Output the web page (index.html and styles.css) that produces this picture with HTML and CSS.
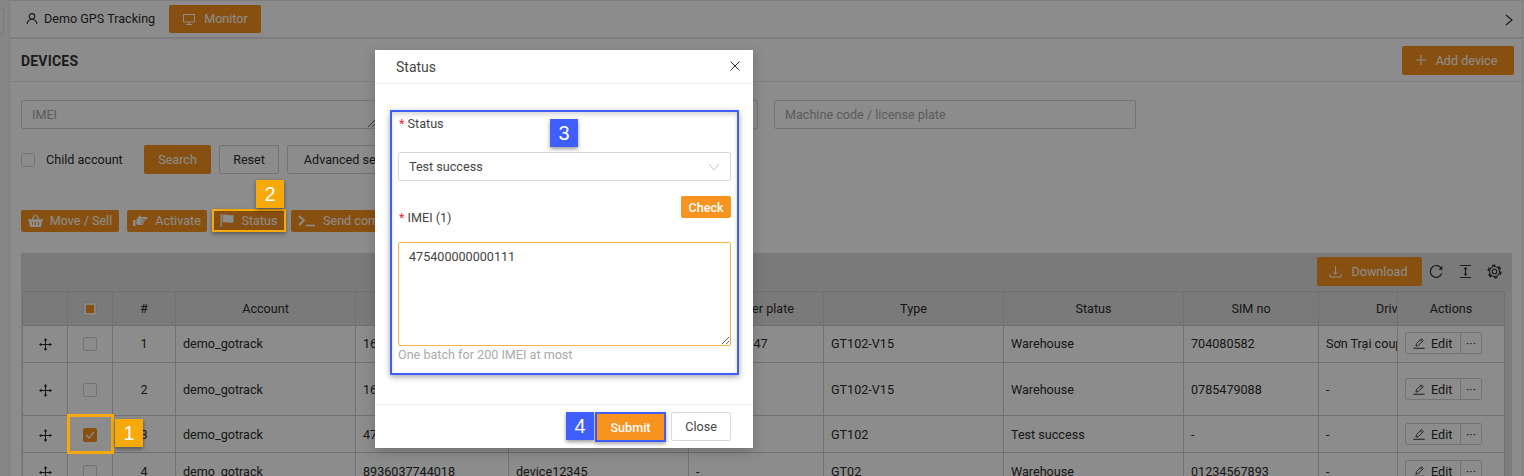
FILE: index.html
```html
<!DOCTYPE html>
<html lang="en">
<head>
    <meta charset="UTF-8">
    <title>Devices</title>
    <link rel="stylesheet" href="styles.css">
</head>
<body>
    <svg class="defs" width="0" height="0">
        <symbol id="i-move" viewBox="0 0 16 16">
            <path d="M8 1.500v13M1.500 8h13" fill="none" stroke="currentColor" stroke-width="1.200"/>
            <path d="M8 0l2.200 3H5.800zM8 16l-2.200-3h4.400zM0 8l3-2.200v4.400zM16 8l-3 2.200V5.800z" fill="currentColor"/>
        </symbol>
        <symbol id="i-edit" viewBox="0 0 16 16">
            <path d="M4.500 11.500l.6-2.700L10.800 3.100l2.100 2.100L7.200 10.900zM9.600 4.300l2.100 2.100" fill="none" stroke="currentColor" stroke-width="1"/>
            <path d="M1.500 14h13" stroke="currentColor" stroke-width="1.100"/>
        </symbol>
    </svg>

    <div class="app">
        <div class="rail"><span class="rail-btn"></span></div>
        <div class="main">
            <div class="topbar">
                <span class="tab">
                    <svg class="icon" width="12" height="13" viewBox="0 0 14 14"><circle cx="7" cy="4.500" r="3.200" fill="none" stroke="currentColor" stroke-width="1.300"/><path d="M1.300 13.500a5.700 5.700 0 0 1 11.400 0" fill="none" stroke="currentColor" stroke-width="1.300"/></svg>
                    Demo GPS Tracking
                </span>
                <span class="btn btn-primary tab-active">
                    <svg class="icon" width="14" height="14" viewBox="0 0 14 14"><path d="M1.500 2.500h11v7.500h-11zM7 10v2.500M4 12.500h6" fill="none" stroke="currentColor" stroke-width="1"/></svg>
                    Monitor
                </span>
                <svg class="top-arrow" width="10" height="12" viewBox="0 0 10 12"><path d="M2 1l6 5-6 5" fill="none" stroke="currentColor" stroke-width="1.100"/></svg>
            </div>

            <div class="panel">
                <div class="panel-head">
                    <h1>DEVICES</h1>
                    <span class="btn btn-primary btn-add">
                        <svg class="icon" width="12" height="12" viewBox="0 0 12 12"><path d="M6 1v10M1 6h10" fill="none" stroke="currentColor" stroke-width="1.100"/></svg>
                        Add device
                    </span>
                </div>

                <div class="filters">
                    <textarea class="field field-imei" placeholder="IMEI"></textarea>
                    <input class="field field-name" placeholder="Device name">
                    <input class="field field-code" placeholder="Machine code / license plate">
                </div>

                <div class="search-row">
                    <span class="check"></span>
                    <span class="check-label">Child account</span>
                    <span class="btn btn-primary btn-search">Search</span>
                    <span class="btn btn-plain btn-reset">Reset</span>
                    <span class="btn btn-plain btn-advanced">Advanced search</span>
                </div>

                <div class="action-row">
                    <span class="btn btn-primary btn-action act-move">
                        <svg class="icon" width="15" height="13" viewBox="0 0 15 13"><path d="M0 5.200h15v1.600h-.8L13 13H2L.8 6.800H0zM3.700 5.200L6.300.4l1 .5-2.200 4.300zM11.300 5.200L8.700.4l-1 .5 2.200 4.300z" fill="currentColor"/><path d="M4.500 8v3M7.500 8v3M10.500 8v3" stroke="#f7931e" stroke-width="1"/></svg>
                        Move / Sell
                    </span>
                    <span class="btn btn-primary btn-action act-activate">
                        <svg class="icon" width="15" height="13" viewBox="0 0 15 13"><path d="M0 6h2.500v6H0zM3.300 6C4.500 5 5 3 6.500 1.500 7.500 1 8.200 2 7.800 3h5.700c1.500 0 1.500 2.300 0 2.300h-2c.5 1 .2 1.800-.4 2 .2 1-.2 1.700-.8 2 0 1-.5 1.700-1.500 1.700H6c-1 0-1.800-.4-2.700-.9z" fill="currentColor"/><path d="M8 5.300h3.500M8 7.300h3M8 9.300h2.300" stroke="#f7931e" stroke-width=".7"/></svg>
                        Activate
                    </span>
                    <span class="btn btn-primary btn-action act-status">
                        <svg class="icon" width="14" height="13" viewBox="0 0 14 13"><path d="M.5 0h1.300v13H.5zM2.600 1c3.500-1.300 5.500 1.200 10.900 0v7.500c-5 1.200-7.400-1.200-10.900 0z" fill="currentColor"/></svg>
                        Status
                    </span>
                    <span class="btn btn-primary btn-action act-send">
                        <svg class="icon" width="18" height="12" viewBox="0 0 18 12"><path d="M1 1l5 4.500-5 4.500" fill="none" stroke="currentColor" stroke-width="1.800"/><path d="M8 10.500h9" stroke="currentColor" stroke-width="1.600"/></svg>
                        Send command
                    </span>
                </div>

                <div class="table-tools">
                    <span class="btn btn-primary btn-download">
                        <svg class="icon" width="13" height="13" viewBox="0 0 13 13"><path d="M6.500 1v8M3.800 6.500l2.700 2.700 2.700-2.700M1 9v3h11V9" fill="none" stroke="currentColor" stroke-width="1"/></svg>
                        Download
                    </span>
                    <svg class="tool" width="15" height="15" viewBox="0 0 15 15"><path d="M12.800 9.500a5.900 5.900 0 1 1-.2-4.600" fill="none" stroke="currentColor" stroke-width="1.200"/><path d="M13.400 1.800v3.900H9.600z" fill="currentColor"/></svg>
                    <svg class="tool" width="15" height="15" viewBox="0 0 15 15"><path d="M2 1.500h11M2 13.500h11M7.500 3.500v8" fill="none" stroke="currentColor" stroke-width="1.200"/><path d="M7.500 3l2 2.200h-4zM7.500 12l-2-2.200h4z" fill="currentColor"/></svg>
                    <svg class="tool" width="15" height="15" viewBox="0 0 15 15"><circle cx="7.500" cy="7.500" r="2.300" fill="none" stroke="currentColor" stroke-width="1.100"/><circle cx="7.500" cy="7.500" r="5" fill="none" stroke="currentColor" stroke-width="1.100"/><circle cx="7.500" cy="7.500" r="6.300" fill="none" stroke="currentColor" stroke-width="1.600" stroke-dasharray="3.400 3.200"/></svg>
                </div>

                <div class="table-wrap">
                    <table>
                        <colgroup>
                            <col class="c-drag"><col class="c-check"><col class="c-num"><col class="c-account"><col class="c-imei"><col class="c-name"><col class="c-plate"><col class="c-type"><col class="c-status"><col class="c-sim"><col class="c-driver"><col class="c-actions">
                        </colgroup>
                        <thead>
                            <tr>
                                <th></th>
                                <th><span class="check check-some"></span></th>
                                <th>#</th>
                                <th>Account</th>
                                <th>IMEI</th>
                                <th>Device name</th>
                                <th>Number plate</th>
                                <th>Type</th>
                                <th>Status</th>
                                <th>SIM no</th>
                                <th class="clip-head">Driver</th>
                                <th>Actions</th>
                            </tr>
                        </thead>
                        <tbody>
                            <tr class="row-short">
                                <td class="mid"><svg class="drag" width="13" height="13"><use href="#i-move"/></svg></td>
                                <td class="mid"><span class="check"></span></td>
                                <td class="mid">1</td>
                                <td>demo_gotrack</td>
                                <td>1689000000047</td>
                                <td>device047</td>
                                <td>29A-1234.47</td>
                                <td>GT102-V15</td>
                                <td>Warehouse</td>
                                <td>704080582</td>
                                <td class="clip">Sơn Trại coupe</td>
                                <td><span class="edit-group"><span class="edit"><svg width="14" height="14"><use href="#i-edit"/></svg>Edit</span><span class="more">···</span></span></td>
                            </tr>
                            <tr class="row-tall">
                                <td class="mid"><svg class="drag" width="13" height="13"><use href="#i-move"/></svg></td>
                                <td class="mid"><span class="check"></span></td>
                                <td class="mid">2</td>
                                <td>demo_gotrack</td>
                                <td>1689000000088</td>
                                <td>device088</td>
                                <td>-</td>
                                <td>GT102-V15</td>
                                <td>Warehouse</td>
                                <td>0785479088</td>
                                <td>-</td>
                                <td><span class="edit-group"><span class="edit"><svg width="14" height="14"><use href="#i-edit"/></svg>Edit</span><span class="more">···</span></span></td>
                            </tr>
                            <tr class="row-short">
                                <td class="mid"><svg class="drag" width="13" height="13"><use href="#i-move"/></svg></td>
                                <td class="mid"><span class="check check-on"><svg width="10" height="8" viewBox="0 0 10 8"><path d="M1 4l3 3 5-6" fill="none" stroke="#fff" stroke-width="1.200"/></svg></span></td>
                                <td class="mid">3</td>
                                <td>demo_gotrack</td>
                                <td>475400000000111</td>
                                <td>device111</td>
                                <td>-</td>
                                <td>GT102</td>
                                <td>Test success</td>
                                <td>-</td>
                                <td>-</td>
                                <td><span class="edit-group"><span class="edit"><svg width="14" height="14"><use href="#i-edit"/></svg>Edit</span><span class="more">···</span></span></td>
                            </tr>
                            <tr class="row-short">
                                <td class="mid"><svg class="drag" width="13" height="13"><use href="#i-move"/></svg></td>
                                <td class="mid"><span class="check"></span></td>
                                <td class="mid">4</td>
                                <td>demo_gotrack</td>
                                <td>8936037744018</td>
                                <td>device12345</td>
                                <td>-</td>
                                <td>GT02</td>
                                <td>Warehouse</td>
                                <td>01234567893</td>
                                <td>-</td>
                                <td><span class="edit-group"><span class="edit"><svg width="14" height="14"><use href="#i-edit"/></svg>Edit</span><span class="more">···</span></span></td>
                            </tr>
                        </tbody>
                    </table>
                </div>
            </div>
        </div>
    </div>

    <div class="overlay"></div>

    <!-- highlights that were drawn on top of the dimmed page -->
    <span class="mark mark-status"></span>
    <span class="mark mark-check"></span>
    <span class="badge badge-amber badge-1">1</span>
    <span class="badge badge-amber badge-2">2</span>

    <div class="modal">
        <div class="modal-head">
            <span>Status</span>
            <svg class="modal-x" width="10" height="10" viewBox="0 0 10 10"><path d="M.5.5l9 9M9.500.5l-9 9" fill="none" stroke="currentColor" stroke-width="1"/></svg>
        </div>
        <div class="modal-body">
            <div class="form-box">
                <label class="form-label"><i>*</i> Status</label>
                <div class="select">
                    <span>Test success</span>
                    <svg width="12" height="8" viewBox="0 0 12 8"><path d="M1 1l5 6 5-6" fill="none" stroke="#c4c4c4" stroke-width="1"/></svg>
                </div>
                <div class="imei-head">
                    <label class="form-label"><i>*</i> IMEI (1)</label>
                    <span class="btn btn-check">Check</span>
                </div>
                <textarea class="imei-input">475400000000111</textarea>
                <div class="help">One batch for 200 IMEI at most</div>
            </div>
        </div>
        <div class="modal-foot">
            <span class="btn btn-submit">Submit</span>
            <span class="btn btn-close">Close</span>
        </div>
    </div>

    <span class="badge badge-blue badge-3">3</span>
    <span class="badge badge-blue badge-4">4</span>
</body>
</html>
```

FILE: styles.css
```css
* {
    box-sizing: border-box;
}

html, body {
    margin: 0;
    height: 476px;
    overflow: hidden;
}

body {
    font-family: Roboto, "Liberation Sans", sans-serif;
    font-size: 12.6px;
    color: #2b2b2b;
    background: #fff;
}

.defs {
    position: absolute;
}

.app {
    display: flex;
    height: 476px;
    padding-right: 1px;
}

.rail {
    width: 10px;
    flex: none;
    padding-top: 8px;
    border-right: 1px solid #e6e6e6;
    background: #f4f4f4;
}

.rail-btn {
    display: block;
    width: 4px;
    height: 26px;
    border: 1px solid #ddd;
    border-left: 0;
    border-radius: 0 2px 2px 0;
}

.main {
    flex: 1;
    min-width: 0;
    border-right: 1px solid #e6e6e6;
}

.topbar {
    display: flex;
    align-items: center;
    height: 39px;
    padding: 0 8px 1px 16px;
    border-top: 1px solid #e6e6e6;
    border-bottom: 2px solid #e6e6e6;
}

.tab {
    display: flex;
    align-items: center;
    gap: 6px;
    width: 143px;
}

.icon {
    flex: none;
}

.top-arrow {
    margin: 2px 0 0 auto;
}

.btn {
    display: inline-flex;
    align-items: center;
    justify-content: center;
    border-radius: 2px;
    white-space: nowrap;
}

.btn-primary {
    background: #f7931e;
    color: #fff;
}

.btn-plain {
    background: #fff;
    border: 1px solid #d4d4d4;
    height: 29px;
}

.tab-active {
    width: 92px;
    height: 28px;
    gap: 8px;
}

.panel {
    padding: 0 10px 0 11px;
}

.panel-head {
    display: flex;
    align-items: center;
    justify-content: space-between;
    height: 43px;
    margin: 0 -10px 0 -11px;
    padding: 0 8px 0 11px;
    border-bottom: 1px solid #e8e8e8;
}

h1 {
    margin: 2px 0 0;
    font-size: 14px;
    font-weight: 700;
    color: #333;
    letter-spacing: .2px;
}

.btn-add {
    width: 112px;
    height: 29px;
    gap: 9px;
    padding-right: 4px;
}

.filters {
    display: flex;
    margin-top: 18px;
    gap: 14px;
}

.field {
    height: 29px;
    margin: 0;
    padding: 0 10px;
    font: inherit;
    line-height: 27px;
    color: #333;
    background: #fff;
    border: 1px solid #d4d4d4;
    border-radius: 2px;
    outline: 0;
}

.field::placeholder {
    color: #a8a8a8;
}

.field-imei {
    width: 356px;
}

.field-name {
    width: 367px;
}

.field-code {
    width: 362px;
    margin-left: 2px;
}

.search-row {
    display: flex;
    align-items: center;
    height: 29px;
    margin-top: 16px;
}

.check {
    display: inline-flex;
    align-items: center;
    justify-content: center;
    width: 14px;
    height: 14px;
    flex: none;
    vertical-align: middle;
    background: #fff;
    border: 1px solid #d4d4d4;
    border-radius: 2px;
}

.check-label {
    margin-left: 11px;
    width: 98px;
}

.btn-search {
    width: 67px;
    height: 29px;
}

.btn-reset {
    width: 60px;
    margin-left: 8px;
}

.btn-advanced {
    width: 130px;
    margin-left: 8px;
}

.action-row {
    display: flex;
    margin-top: 36px;
}

.btn-action {
    height: 22px;
    gap: 7px;
    padding-bottom: 1px;
}

.act-move {
    width: 98px;
}

.act-activate {
    width: 80px;
    margin-left: 8px;
}

.act-status {
    width: 70px;
    margin-left: 7px;
}

.act-send {
    width: 130px;
    margin-left: 7px;
    padding-left: 7px;
    justify-content: flex-start;
}

.table-tools {
    display: flex;
    align-items: center;
    justify-content: flex-end;
    height: 37px;
    margin-top: 21px;
    padding-right: 10px;
    gap: 14px;
    background: #dedede;
}

.btn-download {
    width: 105px;
    height: 29px;
    gap: 9px;
    padding-right: 2px;
    margin-right: -7px;
}

.tool {
    color: #333;
}

.table-wrap {
    height: 186px;
    padding: 1px 8px 0 1px;
    background: #e4e4e4;
}

table {
    width: 1482px;
    table-layout: fixed;
    border-collapse: collapse;
    background: #fff;
}

.c-drag, .c-check { width: 45px; }
.c-num { width: 63px; }
.c-account { width: 180px; }
.c-imei { width: 153px; }
.c-name { width: 180px; }
.c-plate { width: 135px; }
.c-type, .c-status { width: 180px; }
.c-sim { width: 135px; }
.c-driver { width: 79px; }
.c-actions { width: 107px; }

th, td {
    padding: 0 7px;
    border: 1px solid #cecece;
    font-weight: 400;
    white-space: nowrap;
    overflow: hidden;
}

th {
    height: 34px;
    text-align: center;
    background: #dedede;
}

.clip-head {
    text-align: left;
    padding-left: 57px;
}

.row-short td {
    height: 37px;
}

.row-tall td {
    height: 53px;
}

/* first row sits a pixel higher in its cells */
tbody tr:first-child td {
    padding-bottom: 2px;
}

.mid {
    text-align: center;
}

.clip {
    text-overflow: clip;
}

.check-some {
    background: #f4f4f4;
}

.check-some::after {
    content: "";
    width: 8px;
    height: 8px;
    background: #f7931e;
}

.check-on {
    background: #f7931e;
    border-color: #f7931e;
}

.drag {
    vertical-align: middle;
    color: #222;
}

.edit-group {
    display: inline-flex;
    height: 22px;
    border: 1px solid #d4d4d4;
    border-radius: 2px;
}

.edit {
    display: flex;
    align-items: center;
    gap: 5px;
    width: 55px;
    padding-left: 6px;
    border-right: 1px solid #d4d4d4;
}

.more {
    display: flex;
    align-items: center;
    justify-content: center;
    width: 20px;
}

.overlay {
    position: absolute;
    inset: 0;
    background: rgba(0, 0, 0, .45);
}

.mark {
    position: absolute;
    border: 3px solid #f8a90a;
    box-shadow: 0 2px 4px rgba(0, 0, 0, .35);
}

.mark-status {
    left: 212px;
    top: 209px;
    width: 74px;
    height: 23px;
    border-width: 2px;
}

.mark-check {
    left: 67px;
    top: 414px;
    width: 47px;
    height: 40px;
    box-shadow: none;
}

.badge {
    position: absolute;
    display: flex;
    align-items: center;
    justify-content: center;
    width: 28px;
    height: 28px;
    font-family: "Liberation Sans", Arial, sans-serif;
    font-size: 20px;
    color: #fff;
    box-shadow: 0 2px 4px rgba(0, 0, 0, .4);
}

.badge-amber {
    background: #f8a90a;
}

.badge-blue {
    background: #3f5efb;
}

.badge-1 { left: 115px; top: 419px; }
.badge-2 { left: 256px; top: 180px; }
.badge-3 { left: 550px; top: 119px; }
.badge-4 { left: 566px; top: 412px; }

.modal {
    position: absolute;
    left: 375px;
    top: 50px;
    width: 378px;
    height: 398px;
    display: flex;
    flex-direction: column;
    background: #fff;
    box-shadow: 0 4px 12px rgba(0, 0, 0, .2);
}

.modal-head {
    display: flex;
    align-items: center;
    justify-content: space-between;
    height: 34px;
    padding: 0 13px 0 21px;
    font-size: 14px;
    color: #444;
    border-bottom: 1px solid #ececec;
}

.modal-x {
    color: #333;
    margin-bottom: 2px;
}

.modal-body {
    flex: 1;
    padding: 26px 14px 0 15px;
}

.form-box {
    height: 265px;
    padding: 2px 6px 0 6px;
    border: 2px solid #3f5efb;
    box-shadow: 0 2px 6px rgba(0, 0, 0, .35), inset 0 3px 4px rgba(0, 0, 0, .15);
}

.form-label {
    display: block;
    line-height: 20px;
    color: #444;
    margin-left: 1px;
}

.form-label i {
    font-style: normal;
    color: #f5222d;
}

.select {
    display: flex;
    align-items: center;
    justify-content: space-between;
    height: 29px;
    margin-top: 18px;
    padding: 0 10px;
    color: #444;
    border: 1px solid #d9d9d9;
    border-radius: 2px;
}

.imei-head {
    display: flex;
    justify-content: space-between;
    height: 31px;
    margin-top: 15px;
}

.imei-head .form-label {
    align-self: flex-end;
    margin-bottom: -1px;
}

.btn-check {
    width: 50px;
    height: 22px;
    font-weight: 500;
    color: #fff;
    background: #f7931e;
}

.imei-input {
    display: block;
    width: 100%;
    height: 104px;
    margin: 15px 0 0;
    padding: 6px 10px;
    font: inherit;
    color: #444;
    border: 1px solid #f8b040;
    border-radius: 2px;
    outline: 0;
}

.help {
    line-height: 18px;
    color: #aaa;
}

.modal-foot {
    display: flex;
    justify-content: flex-end;
    gap: 5px;
    height: 44px;
    padding: 7px 22px 0 0;
    border-top: 1px solid #ececec;
}

.btn-submit {
    width: 71px;
    height: 30px;
    font-weight: 500;
    color: #fff;
    background: #f7931e;
    border: 2px solid #3f5efb;
    border-radius: 0;
    box-shadow: 0 2px 4px rgba(0, 0, 0, .35);
}

.btn-close {
    width: 60px;
    height: 29px;
    color: #444;
    border: 1px solid #d9d9d9;
}
```
